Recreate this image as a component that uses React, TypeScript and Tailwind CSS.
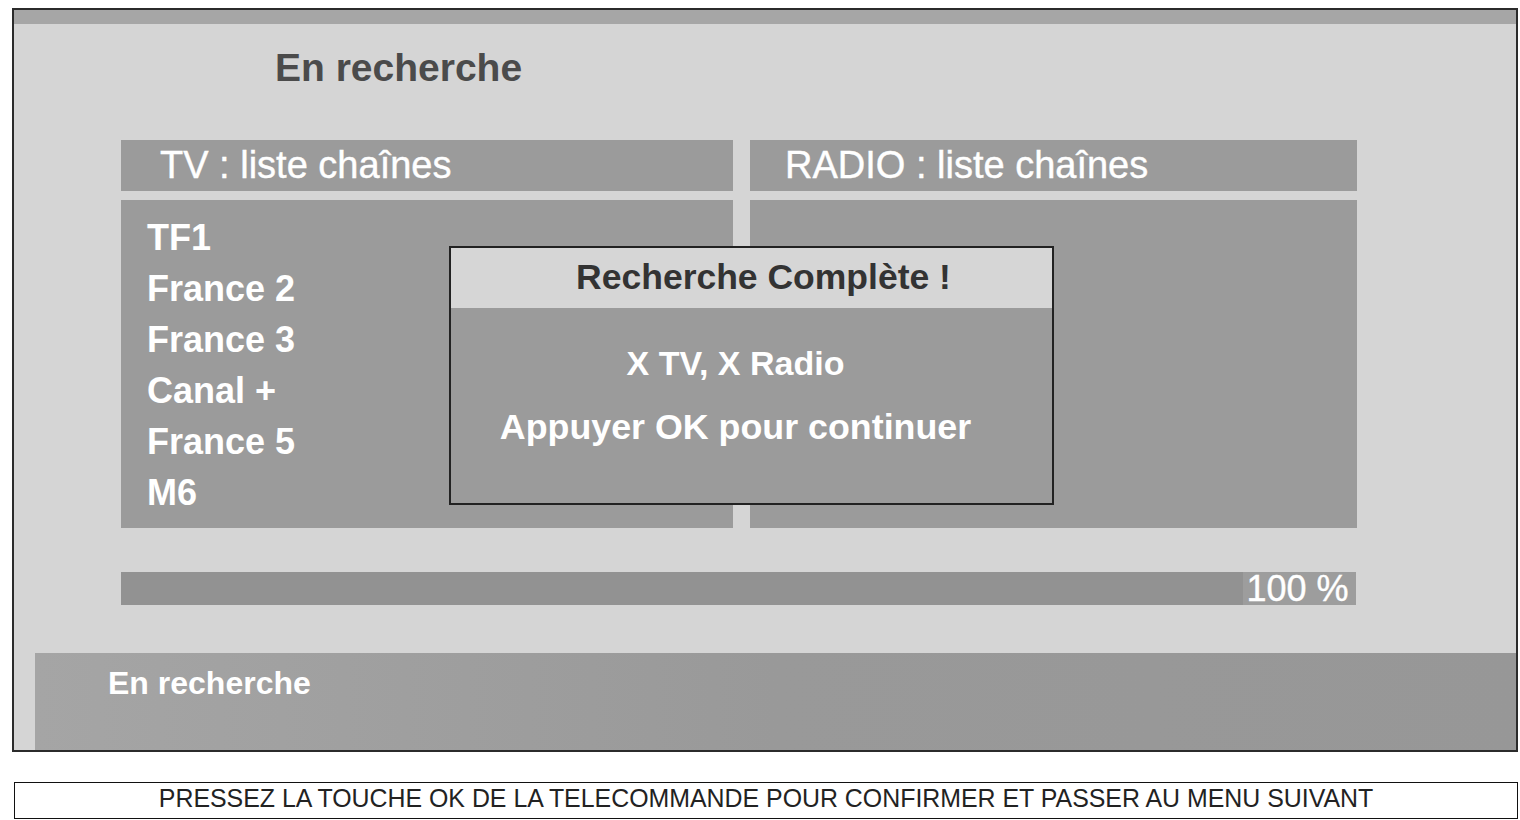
const TV_CHANNELS = ['TF1', 'France 2', 'France 3', 'Canal +', 'France 5', 'M6']

export default function App() {
  return (
    <div className="w-[1520px] h-[820px] bg-white font-['Liberation_Sans',Arial,sans-serif] overflow-hidden">
      <div className="ml-[12px] mt-[8px] w-[1506px] h-[744px] border-2 border-[#2b2b2b] bg-[#d5d5d5] flex flex-col">
        <div className="h-[14px] bg-[#a6a6a6]" />

        <h1 className="mt-[22px] pl-[261px] text-[39px] leading-[44px] font-bold text-[#4b4b4b]">
          En recherche
        </h1>

        <div className="relative mt-[50px] ml-[107px] flex gap-[17px]">
          <ChannelColumn title="TV : liste chaînes" titlePad="pl-[39px]" width="w-[612px]" channels={TV_CHANNELS} />
          <ChannelColumn title="RADIO : liste chaînes" titlePad="pl-[35px]" width="w-[607px]" channels={[]} />

          <div className="absolute left-[328px] top-[106px] w-[605px] h-[259px] border-2 border-[#222] bg-[#9b9b9b] flex flex-col">
            <div className="h-[60px] bg-[#d6d6d6] flex items-center justify-center pl-6">
              <span className="text-[35.5px] font-bold text-[#333]">Recherche Complète !</span>
            </div>
            <div className="flex flex-col items-center pt-[34px] pr-[32px] gap-[22px] text-white">
              <span className="text-[34px] leading-[42px] font-bold">X TV, X Radio</span>
              <span className="text-[35.8px] leading-[42px] font-bold">Appuyer OK pour continuer</span>
            </div>
          </div>
        </div>

        <div className="mt-[44px] ml-[107px] w-[1235px] h-[33px] bg-[#929292] flex justify-end">
          <div className="w-[113px] bg-[#9d9d9d] flex items-center justify-center pr-[4px] text-white text-[36px] leading-none [-webkit-text-stroke:0.4px_white]">
            100 %
          </div>
        </div>

        <div className="mt-[48px] ml-[21px] flex-1 bg-gradient-to-r from-[#a5a5a5] via-[#999] to-[#979797] pl-[73px] pt-[6px]">
          <span className="text-[32px] font-bold text-white">En recherche</span>
        </div>
      </div>

      <div className="mt-[30px] ml-[14px] w-[1504px] h-[37px] border border-[#111] flex items-center justify-center pb-[3px] text-[24.9px] text-[#222]">
        PRESSEZ LA TOUCHE OK DE LA TELECOMMANDE POUR CONFIRMER ET PASSER AU MENU SUIVANT
      </div>
    </div>
  )
}

function ChannelColumn({
  title, titlePad, width, channels,
}: {
  title: string; titlePad: string; width: string; channels: string[]
}) {
  return (
    <div className={`${width} flex flex-col gap-[9px]`}>
      <div className={`h-[51px] bg-[#9b9b9b] flex items-center ${titlePad}`}>
        <span className="text-[38px] text-white [-webkit-text-stroke:0.4px_white]">{title}</span>
      </div>
      <div className="h-[328px] bg-[#9b9b9b] pt-[12px] pl-[26px]">
        {channels.map(c => (
          <div key={c} className="text-[36px] leading-[51px] font-bold text-white">{c}</div>
        ))}
      </div>
    </div>
  )
}
